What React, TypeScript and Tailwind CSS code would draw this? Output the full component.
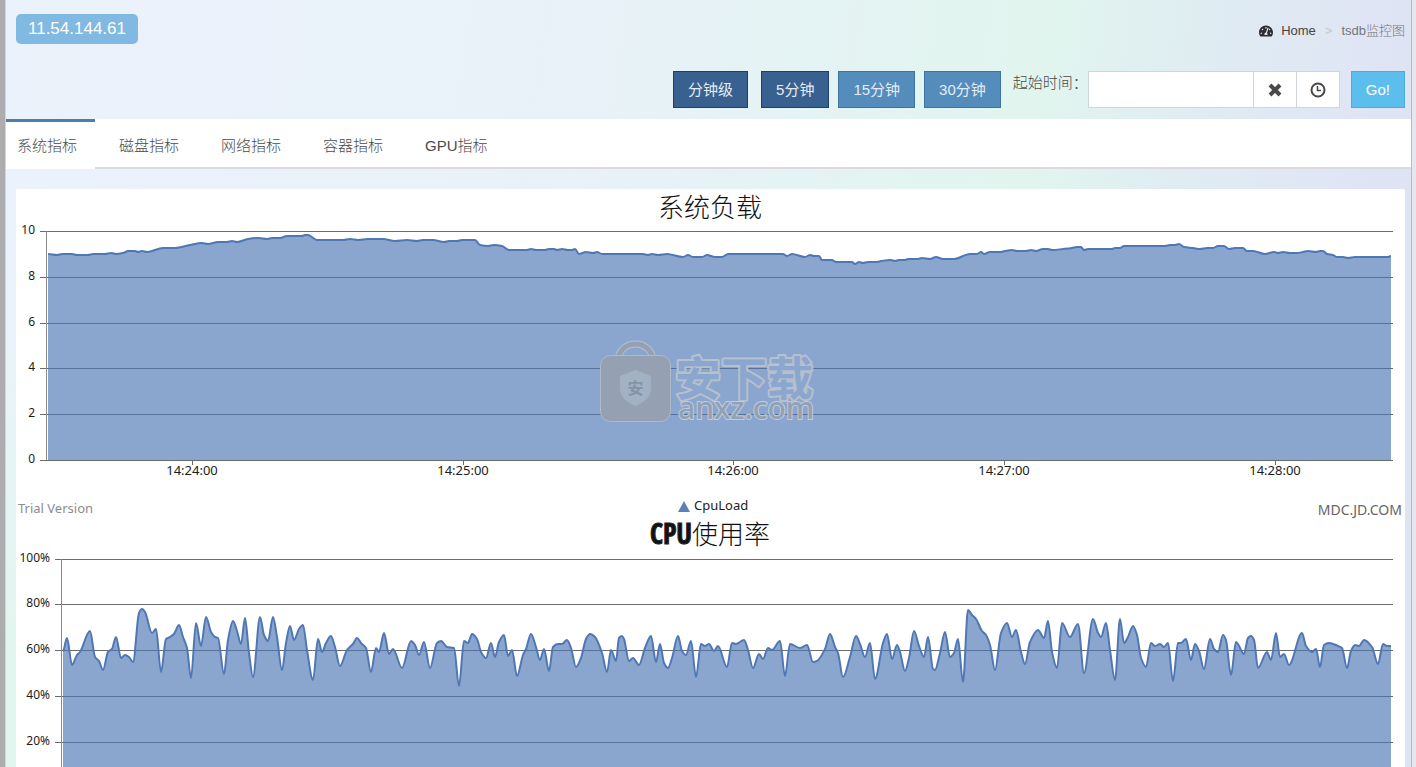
import { FaTachometerAlt } from 'react-icons/fa';

type Point = [number, number];

const cpuLoad: Point[] = [
  [32, 65], [41, 66], [46, 65], [56, 65], [61, 66], [72, 66], [77, 65], [89, 65], [95, 64], [100, 65], [107, 64],
  [112, 62], [119, 62], [122, 63], [126, 62], [131, 63], [147, 59], [159, 59], [174, 56], [186, 54], [192, 55],
  [202, 53], [211, 53], [216, 52], [221, 53], [232, 50], [243, 49], [251, 50], [256, 49], [264, 49], [271, 47],
  [286, 47], [289, 46], [292, 46], [301, 51], [327, 51], [334, 50], [342, 51], [352, 50], [367, 50], [379, 52],
  [391, 51], [401, 52], [407, 51], [417, 51], [428, 53], [433, 52], [441, 52], [446, 51], [459, 51], [464, 56],
  [472, 57], [478, 56], [486, 57], [493, 61], [511, 61], [515, 60], [520, 61], [529, 61], [533, 60], [538, 60],
  [541, 61], [546, 60], [552, 61], [556, 61], [559, 60], [563, 65], [570, 63], [577, 64], [581, 63], [586, 65],
  [627, 65], [632, 66], [636, 65], [642, 66], [651, 65], [667, 68], [672, 66], [677, 68], [686, 68], [691, 66],
  [699, 68], [706, 68], [712, 65], [767, 65], [771, 67], [776, 65], [789, 68], [794, 66], [798, 67], [803, 67],
  [806, 71], [816, 71], [820, 73], [836, 73], [839, 75], [843, 73], [847, 74], [852, 73], [861, 73], [865, 72],
  [875, 71], [879, 72], [883, 71], [889, 71], [892, 70], [902, 70], [906, 69], [914, 70], [920, 68], [927, 70],
  [938, 70], [954, 65], [961, 65], [965, 63], [968, 65], [974, 63], [984, 63], [989, 62], [996, 61], [1001, 62],
  [1010, 62], [1015, 61], [1020, 62], [1027, 60], [1032, 60], [1036, 61], [1047, 60], [1056, 59], [1061, 58],
  [1065, 58], [1068, 61], [1072, 60], [1096, 60], [1099, 59], [1104, 59], [1108, 57], [1149, 57], [1154, 56],
  [1159, 56], [1163, 55], [1168, 58], [1177, 59], [1184, 60], [1191, 59], [1197, 59], [1202, 57], [1208, 57],
  [1213, 60], [1219, 59], [1227, 59], [1231, 62], [1237, 62], [1249, 65], [1258, 63], [1262, 64], [1267, 63],
  [1274, 64], [1281, 64], [1287, 63], [1292, 62], [1300, 63], [1304, 62], [1307, 62], [1311, 65], [1317, 66],
  [1321, 68], [1327, 68], [1332, 69], [1339, 68], [1372, 68], [1375, 67],
];

const cpuUsage: Point[] = [
  [47, 135], [51, 122], [56, 149], [61, 139], [64, 136], [74, 115], [79, 141], [83, 145], [87, 154], [92, 136],
  [96, 133], [100, 121], [105, 142], [109, 139], [113, 141], [117, 146], [123, 97], [126, 93], [129, 96], [136, 117],
  [140, 113], [145, 156], [150, 123], [154, 121], [158, 118], [163, 109], [167, 121], [171, 132], [175, 162],
  [180, 107], [185, 130], [190, 101], [195, 116], [199, 121], [202, 122], [208, 158], [212, 124], [217, 105],
  [221, 115], [225, 128], [229, 102], [233, 137], [237, 161], [244, 101], [248, 119], [252, 125], [257, 101],
  [261, 121], [266, 154], [270, 127], [274, 110], [278, 124], [283, 113], [287, 109], [291, 134], [297, 164],
  [302, 123], [306, 136], [310, 127], [315, 120], [319, 131], [324, 150], [331, 134], [337, 128], [341, 122],
  [345, 127], [350, 132], [355, 156], [360, 132], [363, 136], [368, 117], [373, 138], [377, 133], [386, 152],
  [395, 125], [399, 129], [403, 139], [408, 126], [414, 152], [421, 127], [425, 125], [431, 131], [438, 132],
  [443, 170], [448, 125], [452, 127], [456, 118], [461, 123], [465, 136], [470, 142], [475, 127], [479, 141],
  [483, 126], [488, 119], [492, 140], [496, 134], [501, 160], [507, 139], [510, 133], [515, 118], [520, 131],
  [524, 144], [528, 133], [533, 155], [537, 131], [542, 128], [546, 128], [551, 124], [555, 132], [560, 151],
  [565, 142], [570, 123], [574, 118], [579, 121], [586, 137], [591, 156], [595, 134], [600, 145], [603, 122],
  [606, 120], [608, 123], [613, 145], [617, 142], [623, 149], [629, 132], [635, 120], [640, 146], [644, 128],
  [648, 147], [652, 152], [656, 142], [662, 120], [666, 135], [670, 139], [675, 125], [680, 161], [685, 128],
  [689, 130], [693, 128], [698, 135], [702, 130], [711, 151], [716, 127], [720, 128], [728, 124], [732, 134],
  [737, 152], [743, 138], [747, 143], [752, 132], [756, 134], [764, 125], [769, 160], [774, 128], [784, 132],
  [791, 129], [797, 146], [801, 145], [809, 133], [814, 118], [819, 131], [822, 137], [827, 161], [834, 141],
  [840, 120], [844, 128], [849, 141], [854, 127], [859, 163], [867, 127], [871, 118], [876, 143], [881, 129],
  [884, 136], [889, 155], [893, 142], [898, 115], [903, 130], [908, 141], [912, 121], [917, 153], [919, 154],
  [924, 137], [929, 116], [934, 141], [938, 137], [942, 123], [947, 166], [952, 94], [956, 99], [960, 103],
  [966, 115], [970, 119], [974, 129], [979, 154], [985, 117], [991, 107], [996, 121], [1000, 114], [1005, 136],
  [1009, 148], [1014, 126], [1022, 114], [1028, 122], [1032, 105], [1036, 136], [1041, 152], [1046, 107],
  [1054, 121], [1062, 108], [1068, 157], [1077, 103], [1082, 117], [1085, 121], [1090, 107], [1094, 134],
  [1099, 164], [1104, 103], [1108, 127], [1112, 121], [1117, 110], [1121, 119], [1125, 142], [1130, 151],
  [1135, 127], [1139, 130], [1144, 128], [1148, 131], [1152, 127], [1157, 165], [1162, 127], [1165, 127],
  [1170, 123], [1175, 144], [1179, 128], [1183, 135], [1188, 153], [1194, 123], [1198, 133], [1202, 136],
  [1207, 119], [1210, 124], [1215, 159], [1220, 126], [1228, 138], [1232, 122], [1235, 120], [1238, 124],
  [1242, 152], [1251, 136], [1255, 144], [1260, 117], [1264, 141], [1268, 138], [1273, 149], [1286, 117],
  [1290, 130], [1296, 136], [1300, 133], [1304, 151], [1308, 129], [1313, 127], [1322, 130], [1326, 132],
  [1331, 152], [1335, 135], [1339, 129], [1343, 130], [1348, 124], [1356, 131], [1362, 148], [1367, 128],
  [1371, 130], [1375, 130],
];

// monotone cubic interpolation, so peaks and dips are never overshot
function smoothPath(points: Point[]) {
  const slopes = points.slice(1).map(([x, y], i) => (y - points[i][1]) / (x - points[i][0]));
  const tangents = points.map((_, i) => {
    const before = slopes[i - 1];
    const after = slopes[i];
    if (before === undefined || after === undefined || before * after <= 0) return 0;
    return (2 * before * after) / (before + after);
  });
  let d = `M${points[0][0]} ${points[0][1]}`;
  for (let i = 1; i < points.length; i++) {
    const [x0, y0] = points[i - 1];
    const [x1, y1] = points[i];
    const h = (x1 - x0) / 3;
    d += `C${x0 + h} ${y0 + tangents[i - 1] * h} ${x1 - h} ${y1 - tangents[i] * h} ${x1} ${y1}`;
  }
  return d;
}

interface AreaChartProps {
  label: string;
  height: number;
  points: Point[];
  axisX: number;
  base: number;
  ticks: { y: number; text: string }[];
  children?: React.ReactNode;
}

function AreaChart({ label, height, points, axisX, base, ticks, children }: AreaChartProps) {
  const line = smoothPath(points);

  return (
    <svg
      viewBox={`0 0 1389 ${height}`}
      role="img"
      aria-label={label}
      className="block w-full overflow-visible font-['Noto_Sans','Noto_Sans_CJK_SC',sans-serif] font-normal"
    >
      {ticks.map(({ y, text }) => (
        <g key={text}>
          <line x1={axisX - 6} x2="1377" y1={y + 0.5} y2={y + 0.5} stroke="#6b6b6b" />
          <text x={axisX - 11} y={y + 3} textAnchor="end" className="fill-[#1c1c1c] text-[12px]">
            {text}
          </text>
        </g>
      ))}
      <line x1={axisX + 0.5} x2={axisX + 0.5} y1={ticks[0].y} y2={base} stroke="#8b8b8b" />
      <path d={`${line}V${base}H${points[0][0]}Z`} fill="#4b76b5" fillOpacity="0.65" />
      <path d={line} fill="none" stroke="#4f77b3" strokeWidth="2" strokeLinejoin="round" />
      {children}
    </svg>
  );
}

function Watermark() {
  return (
    <g className="font-['Noto_Sans_CJK_SC',sans-serif]">
      <path d="M602 170C605 150 634 150 637 170" fill="none" stroke="#b4c0d0" strokeWidth="7" />
      <path d="M602 170C605 150 634 150 637 170" fill="none" stroke="#95a1b2" strokeWidth="5" />
      <rect x="584.5" y="166.5" width="70" height="66" rx="10" fill="#95a1b2" stroke="#aebaca" />
      <path d="M619.500 181L635 187V201Q634 211 619.500 217Q605 211 604 201V187Z" fill="#a3b1c4" />
      <text x="619.500" y="205" textAnchor="middle" className="fill-[#8593a8] text-[16px] font-bold">
        安
      </text>
      <text
        x="659"
        y="206"
        fill="#8ba7cf"
        stroke="#b7c0cc"
        strokeWidth="4"
        strokeLinejoin="round"
        paintOrder="stroke"
        className="text-[46px] font-bold"
      >
        安下载
      </text>
      <text
        x="662"
        y="230"
        stroke="#c2ccd9"
        strokeWidth="2"
        strokeLinejoin="round"
        paintOrder="stroke"
        className="fill-[#93a1b5] font-['Noto_Sans',sans-serif] text-[30px] font-medium"
      >
        anxz.com
      </text>
    </g>
  );
}

const loadTicks = [
  { y: 42, text: '10' },
  { y: 88, text: '8' },
  { y: 134, text: '6' },
  { y: 179, text: '4' },
  { y: 225, text: '2' },
  { y: 271, text: '0' },
];

const usageTicks = [
  { y: 43, text: '100%' },
  { y: 88, text: '80%' },
  { y: 134, text: '60%' },
  { y: 180, text: '40%' },
  { y: 226, text: '20%' },
];

const times = [
  { x: 176, text: '14:24:00' },
  { x: 447, text: '14:25:00' },
  { x: 717, text: '14:26:00' },
  { x: 988, text: '14:27:00' },
  { x: 1259, text: '14:28:00' },
];

const ranges = [
  { text: '分钟级', active: true },
  { text: '5分钟', active: true },
  { text: '15分钟', active: false },
  { text: '30分钟', active: false },
];

const tabs = ['系统指标', '磁盘指标', '网络指标', '容器指标', 'GPU指标'];

export default function App() {
  return (
    <div className="flex min-h-screen bg-[#e6e7ec] font-['Liberation_Sans','Noto_Sans_CJK_SC',sans-serif] text-[15px] font-light text-[#4a4a4a]">
      <div className="w-[6px] shrink-0 border-r border-[#d2d4d8] bg-[#adadaf]" />

      <div className="min-w-0 flex-1 bg-[radial-gradient(600px_500px_at_0_100%,#e1f6ee_20%,transparent),linear-gradient(98deg,#ebf2fb_0%,#e9f1f9_33%,#e5f3f4_52%,#e1f5ee_69%,#dfecf2_80%,#dfe4f5_92%)]">
        <header className="pt-[14px] pr-[6px] pb-[11px] pl-[10px]">
          <div className="flex items-start justify-between">
            <span className="rounded-[5px] bg-[#80b9e1] px-3 text-[17px] leading-[30px] text-white">11.54.144.61</span>
            <nav aria-label="breadcrumb" className="flex items-center text-[13px] leading-[34px]">
              <FaTachometerAlt className="mr-2 size-[14px] text-[#2f2f33]" />
              <a href="#home" className="text-[#444]">
                Home
              </a>
              <span className="mx-[9px] text-[#c2c8cc]">&gt;</span>
              <span className="text-[#74777b]">tsdb监控图</span>
            </nav>
          </div>

          <form className="mt-[23px] flex flex-wrap items-start justify-end" onSubmit={(e) => e.preventDefault()}>
            <div className="mr-3 flex gap-[9px]">
              {ranges.map(({ text, active }, i) => (
                <button
                  key={text}
                  type="button"
                  className={`h-[37px] border px-[14px] pt-px font-normal text-[#e4edf6] ${
                    active ? 'border-[#1f3f6b] bg-[#38618f]' : 'border-[#3c73a6] bg-[#548cbc]'
                  } ${i === 0 ? 'mr-1' : ''}`}
                >
                  {text}
                </button>
              ))}
            </div>
            <label htmlFor="start" className="leading-6">
              起始时间：
            </label>
            <div className="mr-[11px] flex h-[37px] border border-[#d0d5da] bg-white">
              <input id="start" type="text" className="w-[164px] px-2 outline-none" />
              <button
                type="button"
                aria-label="清除"
                className="flex w-[43px] items-center justify-center border-l border-[#d0d5da]"
              >
                <svg viewBox="0 0 14 14" className="size-[14px]" fill="none" stroke="#48484a" strokeWidth="4">
                  <path d="M2 2L12 12M12 2L2 12" />
                </svg>
              </button>
              <button
                type="button"
                aria-label="选择时间"
                className="flex w-[43px] items-center justify-center border-l border-[#d0d5da]"
              >
                <svg viewBox="0 0 16 16" className="size-4" fill="none" stroke="#48484a" strokeWidth="2">
                  <circle cx="8" cy="8" r="6.500" />
                  <path d="M7.500 4V8.500H11" strokeWidth="1.500" />
                </svg>
              </button>
            </div>
            <button type="submit" className="h-[37px] border border-[#4aabdc] bg-[#5bbeed] px-[14px] pt-px text-white">
              Go!
            </button>
          </form>
        </header>

        <div role="tablist" className="flex gap-[13px] bg-white shadow-[inset_0_-2px_0_#d9dbdf]">
          {tabs.map((tab, i) => (
            <button
              key={tab}
              type="button"
              role="tab"
              aria-selected={i === 0}
              className={`h-[50px] border-t-[3px] pt-0.5 pr-[18px] pl-[11px] ${
                i === 0 ? 'border-[#4a7fab] bg-white' : 'border-transparent'
              }`}
            >
              {tab}
            </button>
          ))}
        </div>

        <main className="pt-5 pr-[6px] pl-[10px]">
          <div className="bg-white">
            <AreaChart label="系统负载" height={327} points={cpuLoad} axisX={30} base={271} ticks={loadTicks}>
              <text x="694" y="28" textAnchor="middle" className="fill-[#111] text-[26px] font-light">
                系统负载
              </text>
              {times.map(({ x, text }) => (
                <g key={text}>
                  <line x1={x + 0.5} x2={x + 0.5} y1="271" y2="276" stroke="#6b6b6b" />
                  <text x={x} y="286" textAnchor="middle" className="fill-[#1c1c1c] text-[13px]">
                    {text}
                  </text>
                </g>
              ))}
              <text x="2" y="324" className="fill-[#8c8c8c] text-[13px]">
                Trial Version
              </text>
              <path d="M668 312L674 323H662Z" fill="#5b80b8" />
              <text x="678" y="321" className="fill-[#222] text-[13px]">
                CpuLoad
              </text>
              <text x="1386" y="326" textAnchor="end" className="fill-[#666] text-[14px]">
                MDC.JD.COM
              </text>
              <Watermark />
            </AreaChart>

            <AreaChart label="CPU使用率" height={251} points={cpuUsage} axisX={45} base={251} ticks={usageTicks}>
              <text x="694" y="28" textAnchor="middle" className="fill-[#111] text-[26px] font-light">
                <tspan
                  stroke="#222"
                  className="font-['Liberation_Sans_Narrow','Open_Sans_Condensed',sans-serif] text-[28px] font-black"
                >
                  CPU
                </tspan>
                使用率
              </text>
            </AreaChart>
          </div>
        </main>
      </div>

      <div className="w-[5px] shrink-0 border-l border-[#b4b9cc]" />
    </div>
  );
}
